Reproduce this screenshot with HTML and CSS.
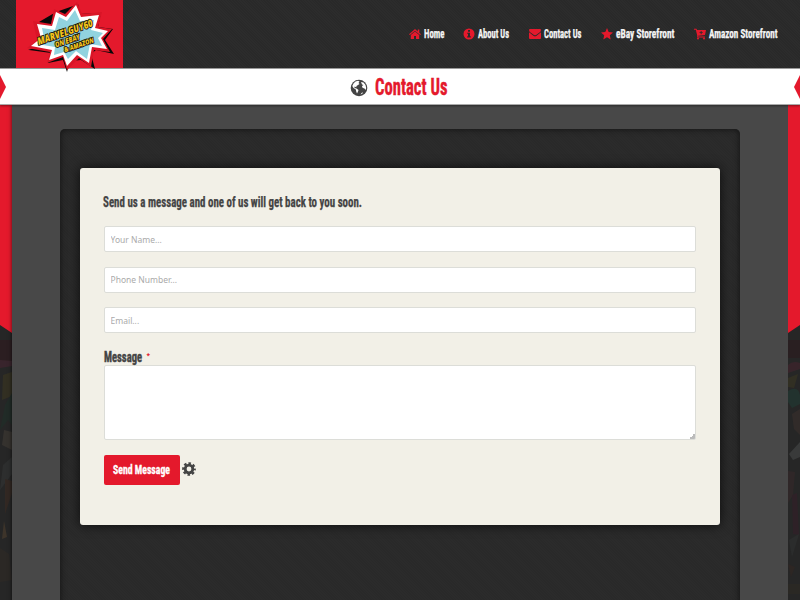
FILE: index.html
```
<!DOCTYPE html>
<html lang="en">
<head>
<meta charset="utf-8">
<title>Contact Us</title>
<link rel="stylesheet" href="styles.css">
</head>
<body>
<header class="header">
  <a class="logo">
    <svg class="burst" width="92" height="76" viewBox="24 0 92 76">
      <path fill="#080808" d="M28 50 L40 46 39 22 56 12 76 5 78 4 80 14 101 13 98 27 113 29 105 40 114 54 96 50 91 54 95 69 81 60 70 61 67 72 63 60 48 63 51 53 29 50Z"/>
      <path fill="#d91527" d="M27 48 L37 40 33 21 51 24 54 9 65 14 77 2 82 14 102 12 98 27 112 29 103 39 110 52 94 50 91 67 79 58 67 70 63 57 47 63 50 52Z"/>
      <path fill="#fff" d="M31 46 L41 38 37 24 52 26 56 12 66 17 76 5 81 17 99 15 95 28 108 31 101 38 107 49 92 47 89 63 77 55 67 66 63 55 49 60 52 50Z"/>
      <path fill="#91d3df" d="M37 44 L44 38 42 28 55 30 59 17 67 21 75 10 80 21 94 20 91 30 103 33 98 38 102 46 90 44 87 59 76 51 68 59 64 52 54 55 55 47Z"/>
      <g class="logo-text" transform="rotate(-19 40 44)">
        <text x="38.500" y="44.500" font-size="10" textLength="58" lengthAdjust="spacingAndGlyphs">MARVELGUY60</text>
        <text x="54" y="52.500" font-size="7.500" textLength="26" lengthAdjust="spacingAndGlyphs">ON EBAY</text>
        <text x="61" y="60" font-size="7" textLength="31" lengthAdjust="spacingAndGlyphs">&amp; AMAZON</text>
      </g>
    </svg>
  </a>
  <nav class="nav">
    <a class="item first"><svg class="icon" width="12" height="12" viewBox="0 0 12 12"><path d="M6 1 0 6.200 .8 7 6 2.700 11.200 7 12 6.200 10.300 4.700V1.500H8.800V3.400ZM6 3.600 1.800 7V11H5V8H7V11H10.200V7Z"/></svg><svg class="label" width="21" height="18"><text y="13" textLength="20.500" lengthAdjust="spacingAndGlyphs">Home</text></svg></a>
    <a class="item"><svg class="icon" width="12" height="12" viewBox="0 0 12 12"><path fill-rule="evenodd" d="M6 .5A5.500 5.500 0 1 0 6 11.500 5.500 5.500 0 1 0 6 .5ZM5 2H7V3.700H5ZM4.200 4.700H7V8.300H7.800V9.500H4.200V8.300H5V5.800H4.200Z"/></svg><svg class="label" width="32" height="18"><text y="13" textLength="31" lengthAdjust="spacingAndGlyphs">About Us</text></svg></a>
    <a class="item"><svg class="icon" width="12" height="12" viewBox="0 0 12 12"><path d="M0 2Q0 1 1 1H11Q12 1 12 2 12 3.500 10.500 4.500L7 7Q6 7.600 5 7L1.500 4.500Q0 3.500 0 2ZM0 4.300 4.500 7.700Q6 8.700 7.500 7.700L12 4.300V10Q12 11 11 11H1Q0 11 0 10Z"/></svg><svg class="label" width="38" height="18"><text y="13" textLength="37.500" lengthAdjust="spacingAndGlyphs">Contact Us</text></svg></a>
    <a class="item"><svg class="icon" width="12" height="12" viewBox="0 0 12 12"><path d="M6 0 7.700 4 12 4.400 8.800 7.200 9.700 11.500 6 9.300 2.300 11.500 3.200 7.200 0 4.400 4.300 4Z"/></svg><svg class="label" width="59" height="18"><text y="13" textLength="58.500" lengthAdjust="spacingAndGlyphs">eBay Storefront</text></svg></a>
    <a class="item"><svg class="icon" width="12" height="12" viewBox="0 0 12 12"><path fill-rule="evenodd" d="M0 .8H2.500L3 2H12L11 7 4.200 7.800V8.600H11V9.500H3.200V7.500L1.800 1.800H0ZM6.700 3V4.200H5.500V5.100H6.700V6.300H7.600V5.100H8.800V4.200H7.600V3Z"/><circle cx="4" cy="10.500" r="1"/><circle cx="10" cy="10.500" r="1"/></svg><svg class="label" width="69" height="18"><text y="13" textLength="68.500" lengthAdjust="spacingAndGlyphs">Amazon Storefront</text></svg></a>
  </nav>
</header>
<section class="title-bar">
  <i class="notch left"></i>
  <svg class="globe" width="18" height="18" viewBox="0 0 18 18"><circle cx="9" cy="9" r="8.300" fill="#444"/><path fill="#fff" d="M5.500 2.500 8 1.700 9.500 2.500 8.500 4 9.500 5 8 6 6.500 7 6.300 8.300 4.500 7.500 4.500 9 6.500 9.500 8.500 11 8 12.500 7 14.500 6.200 12.500 5.800 10.500 3.500 9 2.300 7 3.500 4.500ZM11 3 13.500 3.500 15.500 6 16.200 9 15.500 11 14.500 9.500 13 9 12 8 12.300 6.800 13.500 6 12 5.500ZM11.500 14 13 13.200 12.500 14.500 10.500 15.500Z"/></svg>
  <h1><svg width="73" height="32"><text y="24" textLength="72.500" lengthAdjust="spacingAndGlyphs">Contact Us</text></svg></h1>
  <i class="notch right"></i>
</section>
<main class="stage">
  <aside class="side">
    <svg class="art" width="12" height="496"><g><path fill="#30191d" d="M0 235H12V256H0Z"/><path fill="#482331" d="M0 255 12 256V261L0 263Z"/><path fill="#3c3820" d="M3 270 12 267V291L2 295Z"/><path fill="#1e3029" d="M12 288 5 300 0 325 8 315 12 320Z"/><path fill="#423c36" d="M4 325 12 327V345L2 340Z"/><path fill="#333535" d="M12 352 3 360 0 385 12 369Z"/><path fill="#3c2a22" d="M5 374 12 376V388L5 409Z"/><path fill="#51402e" d="M4 416 7 432 2 434Z"/><path fill="#302b25" d="M0 443 9 449 12 475 0 477Z"/></g></svg>
    <i class="ribbon"></i>
  </aside>
  <div class="column">
    <div class="well">
      <form class="card">
        <h2><svg width="260" height="22"><text y="16" textLength="259" lengthAdjust="spacingAndGlyphs">Send us a message and one of us will get back to you soon.</text></svg></h2>
        <input type="text" placeholder="Your Name...">
        <input type="text" placeholder="Phone Number...">
        <input type="text" placeholder="Email...">
        <label><svg width="39" height="18"><text y="14" textLength="38" lengthAdjust="spacingAndGlyphs">Message</text></svg><span class="required">*</span></label>
        <textarea></textarea>
        <div class="actions">
          <button type="button"><svg width="57" height="18"><text y="13" textLength="57" lengthAdjust="spacingAndGlyphs">Send Message</text></svg></button>
          <svg class="gear" width="14" height="14" viewBox="-7 -7 14 14"><circle r="3.800" fill="none" stroke="#444" stroke-width="2.800"/><circle r="5.700" fill="none" stroke="#444" stroke-width="2.300" stroke-dasharray="2.500 1.977" stroke-dashoffset="1.250"/></svg>
        </div>
      </form>
    </div>
  </div>
  <aside class="side">
    <svg class="art" width="12" height="496"><g><path fill="#2d1b1e" d="M0 235H12V253H0Z"/><path fill="#46242f" d="M0 260Q5 255 12 258V264L0 268Z"/><path fill="#3b3721" d="M0 273 10 269 6 283 0 282Z"/><path fill="#1f3d35" d="M0 286Q10 280 12 290V299L4 303 0 297Z"/><path fill="#3b302c" d="M4 309 12 304V330L6 324Z"/><path fill="#494b4b" d="M1 349 12 337V352L5 355Z"/><path fill="#37292a" d="M0 366 7 367 5 390 0 398Z"/><path fill="#351e29" d="M4 390 9 388 11 430 5 429Z"/><path fill="#303232" d="M1 435 11 429 4 452Z"/><path fill="#332622" d="M0 459 7 462 3 472Z"/><path fill="#2f2a24" d="M0 479H12V489H0Z"/></g></svg>
    <i class="ribbon flip"></i>
  </aside>
</main>
</body>
</html>
```
FILE: styles.css
```
* { box-sizing: border-box; }
body {
  margin: 0;
  height: 600px;
  overflow: hidden;
  background: #292929;
  font-family: "Noto Sans", sans-serif;
}
svg { display: block; overflow: visible; }
svg text {
  font-family: "Liberation Sans Narrow", "Roboto Condensed", Roboto, sans-serif;
  font-weight: 700;
}
.header {
  position: relative;
  z-index: 2;
  height: 68px;
  padding: 0 22px 0 16px;
  display: flex;
  justify-content: space-between;
  background: repeating-linear-gradient(45deg, #292929 0 1px, #2c2c2c 1px 2px);
}
.logo { width: 107px; height: 68px; padding-left: 8px; background: #e4192c; }
.burst .logo-text text {
  font-family: "Open Sans", sans-serif;
  font-weight: 800;
  font-style: italic;
  fill: #f5c51c;
  stroke: #111;
  stroke-width: 1.8px;
  paint-order: stroke;
}
.nav { display: flex; gap: 19px; height: 68px; align-items: center; }
.item { display: flex; align-items: center; gap: 3px; }
.item.first { margin-right: -1px; }
.icon { fill: #e4192c; }
.label text { font-size: 12.500px; fill: #f5f5f5; stroke: #f5f5f5; stroke-width: .25px; }
.title-bar {
  position: relative;
  z-index: 1;
  height: 37px;
  display: flex;
  justify-content: center;
  align-items: center;
  gap: 7px;
  padding-right: 2px;
  background: #fff;
  border-top: 1.500px solid #999;
  border-bottom: 1px solid #aaa;
  box-shadow: 0 1px 2px #0006;
}
.title-bar h1 { margin: 0; }
.globe { margin-top: 2px; }
.title-bar text { font-size: 23px; fill: #e4192c; stroke: #e4192c; stroke-width: .4px; }
.notch { position: absolute; top: 6px; width: 6px; height: 24px; background: #e4192c; }
.left { left: 0; clip-path: polygon(0 0, 100% 50%, 0 100%); }
.right { right: 0; clip-path: polygon(100% 0, 0 50%, 100% 100%); }
.stage { display: grid; grid-template-columns: 12px 1fr 12px; height: 495px; }
.side { position: relative; background: #262626; }
.art g { filter: blur(.6px); opacity: .55; }
.art { overflow: hidden; }
.ribbon {
  position: absolute;
  inset: 0 0 auto;
  height: 228px;
  background: #e4192c;
  clip-path: polygon(0 0, 100% 0, 100% 100%, 0 220px);
}
.flip { transform: scaleX(-1); }
.column { z-index: 0; padding: 24px 48px 0; background: #484848; box-shadow: 0 0 4px #000a; }
.well {
  height: 480px;
  padding: 39px 20px 0 19.500px;
  border-radius: 5px;
  background: repeating-linear-gradient(45deg, #292929 0 1px, #2b2b2b 1px 2px);
  box-shadow: inset 0 0 6px #111;
}
.card {
  height: 357px;
  padding: 23px 24px 0 24px;
  border-radius: 3px;
  background: #f2f0e7;
  box-shadow: 0 0 12px #000b;
}
.card h2 { margin: 0 0 13px -.5px; }
.card h2 text { font-size: 15px; fill: #444; stroke: #444; stroke-width: .25px; }
.card input {
  display: block;
  width: 100%;
  height: 26px;
  margin: 0 0 14.500px;
  padding: 0 6px;
  border: 1px solid #dcddd8;
  border-radius: 2px;
  background: #fff;
  font: 8.500px "Noto Sans", sans-serif;
}
.card input::placeholder { color: #aaa; }
.card label { display: flex; gap: 4px; height: 17px; margin-top: 2px; }
.card label text { font-size: 14px; fill: #444; stroke: #444; stroke-width: .4px; }
.required { color: #e4192c; font: 700 6.500px/16px "Noto Sans", sans-serif; }
.card textarea {
  display: block;
  width: 100%;
  height: 75px;
  border: 1px solid #dcddd8;
  border-radius: 2px;
  background: linear-gradient(135deg, transparent 50%, #bbb 50%) right bottom / 6px 6px no-repeat #fff;
  resize: none;
}
.actions { display: flex; align-items: center; gap: 2px; margin-top: 15px; }
.gear { margin-bottom: 2px; }
.actions button {
  width: 76px;
  height: 30px;
  padding: 0 9px;
  border: 0;
  border-radius: 2px;
  background: #e4192c;
}
.actions text { font-size: 12.500px; fill: #fff; stroke: #fff; stroke-width: .3px; }
```
